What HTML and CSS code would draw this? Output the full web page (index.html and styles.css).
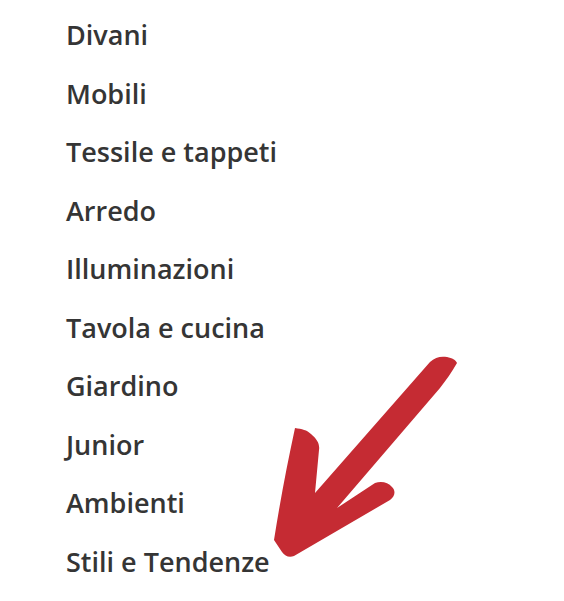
FILE: index.html
```html
<!DOCTYPE html>
<html lang="it">
<head>
    <meta charset="UTF-8">
    <meta name="viewport" content="width=device-width, initial-scale=1.0">
    <title>Categorie</title>
    <link rel="stylesheet" href="styles.css">
</head>
<body>
    <div class="menu">
        <ul class="menu-list">
            <li><a href="#">Divani</a></li>
            <li><a href="#">Mobili</a></li>
            <li><a href="#">Tessile e tappeti</a></li>
            <li><a href="#">Arredo</a></li>
            <li><a href="#">Illuminazioni</a></li>
            <li><a href="#">Tavola e cucina</a></li>
            <li><a href="#">Giardino</a></li>
            <li><a href="#">Junior</a></li>
            <li><a href="#">Ambienti</a></li>
            <li><a href="#">Stili e Tendenze</a></li>
        </ul>

        <!-- hand drawn arrow over the list -->
        <svg class="arrow" width="564" height="601" viewBox="0 0 564 601">
            <path d="M457 363 C452 372 446 380 440 388 L337 508 L375 483 C381 481 388 482 392 487 C396 491 395 496 390 500 L294 556 C289 558 285 556 282 552 L274 540 C280 502 287 465 295 428 C302 429 307 430 311 434 C317 439 320 444 319 450 L315 493 L430 362 C435 357 441 356 447 357 C452 358 456 360 457 363 Z" fill="#c52b33"/>
        </svg>
    </div>
</body>
</html>
```

FILE: styles.css
```css
body {
    margin: 0;
    padding: 0;
    background-color: #fff;
    font-family: "Open Sans", Arial, sans-serif;
}
.menu {
    position: relative;
    width: 564px;
    height: 601px;
    overflow: hidden;
}
.menu-list {
    list-style: none;
    margin: 0;
    padding: 6px 0 0 66px;
}
.menu-list li {
    height: 58.5px;
    line-height: 58.5px;
}
.menu-list a {
    color: #353535;
    font-size: 27px;
    font-weight: 600;
    text-decoration: none;
}
.arrow {
    position: absolute;
    top: 0;
    left: 0;
}
```
